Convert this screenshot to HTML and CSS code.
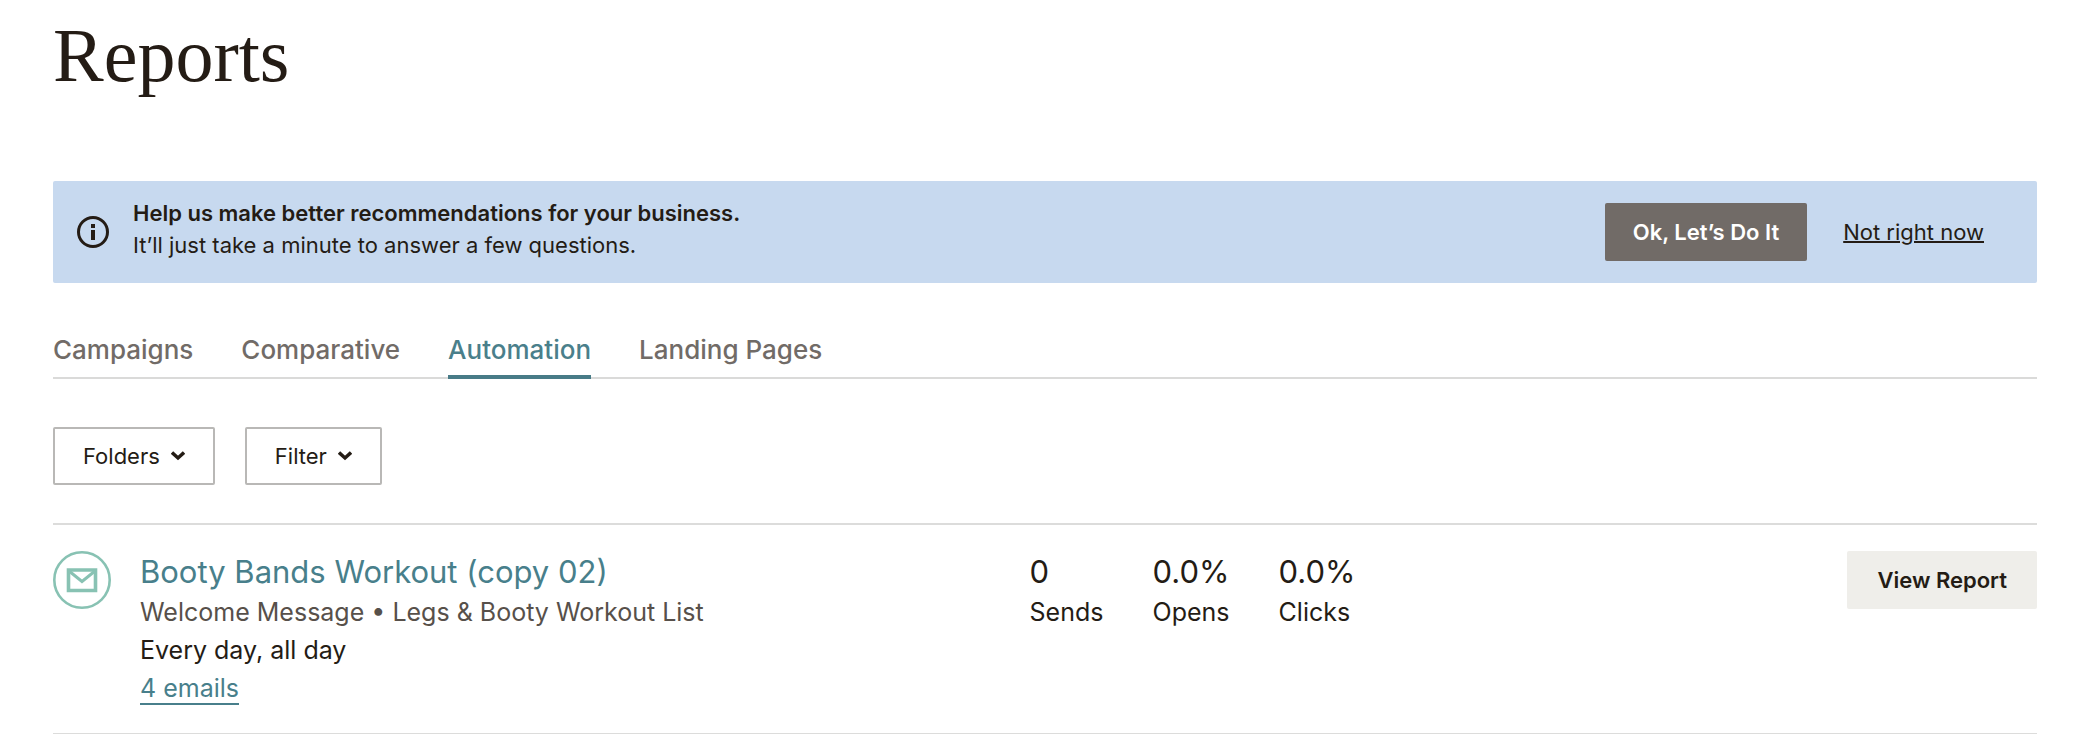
FILE: index.html
```html
<!DOCTYPE html>
<html lang="en">
<head>
    <meta charset="UTF-8">
    <meta name="viewport" content="width=device-width, initial-scale=1.0">
    <title>Reports</title>
    <link rel="stylesheet" href="styles.css">
</head>
<body>
    <main class="container">
        <h1>Reports</h1>

        <section class="banner">
            <svg class="banner-icon" viewBox="0 0 32 32" fill="none">
                <circle cx="16" cy="16" r="14.5" stroke="currentColor" stroke-width="3"/>
                <path d="M14 8h4v4h-4zM14 14h4v10h-4z" fill="currentColor"/>
            </svg>
            <div class="banner-text">
                <strong>Help us make better recommendations for your business.</strong>
                <p>It’ll just take a minute to answer a few questions.</p>
            </div>
            <div class="banner-actions">
                <button type="button" class="btn btn-dark">Ok, Let’s Do It</button>
                <a href="#" class="dismiss">Not right now</a>
            </div>
        </section>

        <nav class="tabs">
            <a href="#">Campaigns</a>
            <a href="#">Comparative</a>
            <a href="#" class="active" aria-current="page">Automation</a>
            <a href="#">Landing Pages</a>
        </nav>

        <div class="filters">
            <button type="button" class="btn btn-outline">
                Folders
                <svg class="chevron" viewBox="0 0 14 10" fill="none"><path d="M1 1.5l6 5.5 6-5.5" stroke="currentColor" stroke-width="3.5"/></svg>
            </button>
            <button type="button" class="btn btn-outline">
                Filter
                <svg class="chevron" viewBox="0 0 14 10" fill="none"><path d="M1 1.5l6 5.5 6-5.5" stroke="currentColor" stroke-width="3.5"/></svg>
            </button>
        </div>

        <div class="report-list">
            <article class="report-item">
                <svg class="report-icon" viewBox="0 0 58 58" fill="none" stroke="currentColor">
                    <circle cx="29" cy="29" r="27.7" stroke-width="2.6"/>
                    <path d="M15.5 19h27v20.5h-27z" stroke-width="3.6"/>
                    <path d="M16 20l13 10.5L42 20" stroke-width="3"/>
                </svg>
                <div class="report-info">
                    <h2><a href="#">Booty Bands Workout (copy 02)</a></h2>
                    <p class="muted">Welcome Message • Legs &amp; Booty Workout List</p>
                    <p>Every day, all day</p>
                    <p><a href="#" class="emails">4 emails</a></p>
                </div>
                <dl class="stats">
                    <div><dd>0</dd><dt>Sends</dt></div>
                    <div><dd>0.0%</dd><dt>Opens</dt></div>
                    <div><dd>0.0%</dd><dt>Clicks</dt></div>
                </dl>
                <button type="button" class="btn btn-light">View Report</button>
            </article>
        </div>
    </main>
</body>
</html>
```
FILE: styles.css
```css
* {
    margin: 0;
    padding: 0;
    box-sizing: border-box;
}

body {
    font-family: Inter, "Liberation Sans", Arial, sans-serif;
    font-size: 25px;
    line-height: 38px;
    background: #fff;
    color: #241c15;
}

.container {
    padding: 13px 51px 0 53px;
}

h1 {
    font-family: "Liberation Serif", Georgia, serif;
    font-size: 76px;
    font-weight: 400;
    line-height: 84px;
    margin-bottom: 84px;
}

.banner {
    display: flex;
    align-items: center;
    padding: 0 53px 0 24px;
    background: #c7d9ef;
    border-radius: 2px;
    font-size: 22px;
    line-height: 32px;
}

.banner-icon {
    width: 32px;
    height: 32px;
    margin-right: 24px;
    flex-shrink: 0;
}

.banner-text {
    flex: 1;
    padding: 16px 0 22px;
}

.banner-text strong {
    font-weight: 600;
}

.banner-actions {
    display: flex;
    align-items: center;
    gap: 36px;
}

.dismiss {
    color: inherit;
    text-decoration-thickness: 2px;
}

.btn {
    height: 58px;
    padding: 0 30px;
    border: none;
    border-radius: 2px;
    font-family: inherit;
    font-size: 22px;
    font-weight: 600;
    color: #241c15;
    white-space: nowrap;
    cursor: pointer;
}

.btn-dark {
    padding: 0 28px;
    background: #716b67;
    color: #fff;
}

.btn-light {
    background: #efeeea;
}

.btn-outline {
    display: flex;
    align-items: center;
    gap: 11px;
    background: #fff;
    border: 2px solid #b9b8b6;
    font-weight: 400;
    padding: 0 28px;
}

.chevron {
    width: 14px;
    height: 10px;
}

.tabs {
    display: flex;
    gap: 48px;
    margin-top: 48px;
    border-bottom: 2px solid #dadad9;
    font-size: 26px;
}

.tabs a {
    padding-bottom: 6px;
    margin-bottom: -2px;
    border-bottom: 4px solid transparent;
    color: #716b67;
    font-weight: 500;
    text-decoration: none;
}

.tabs .active {
    color: #4a7f8b;
    border-bottom-color: #487b87;
}

.filters {
    display: flex;
    gap: 30px;
    margin: 48px 0 38px;
}

.report-list {
    border-top: 2px solid #dcdcdb;
}

.report-item {
    display: grid;
    grid-template-columns: 58px 12fr 11fr auto;
    column-gap: 29px;
    align-items: start;
    padding: 26px 0;
    border-bottom: 1px solid #dcdcdb;
}

.report-icon {
    width: 58px;
    height: 58px;
    color: #88c2b3;
}

h2 {
    font-size: 31px;
    font-weight: 400;
    line-height: 42px;
}

h2 a {
    color: #487f8b;
    text-decoration: none;
}

.muted {
    color: #57504a;
}

.emails {
    color: #487f8b;
    text-decoration: none;
    border-bottom: 2px solid #487f8b;
}

.stats {
    display: grid;
    grid-template-columns: 75px 78px 76px;
    gap: 48px;
}

.stats dd {
    font-size: 31px;
    line-height: 42px;
}
```
